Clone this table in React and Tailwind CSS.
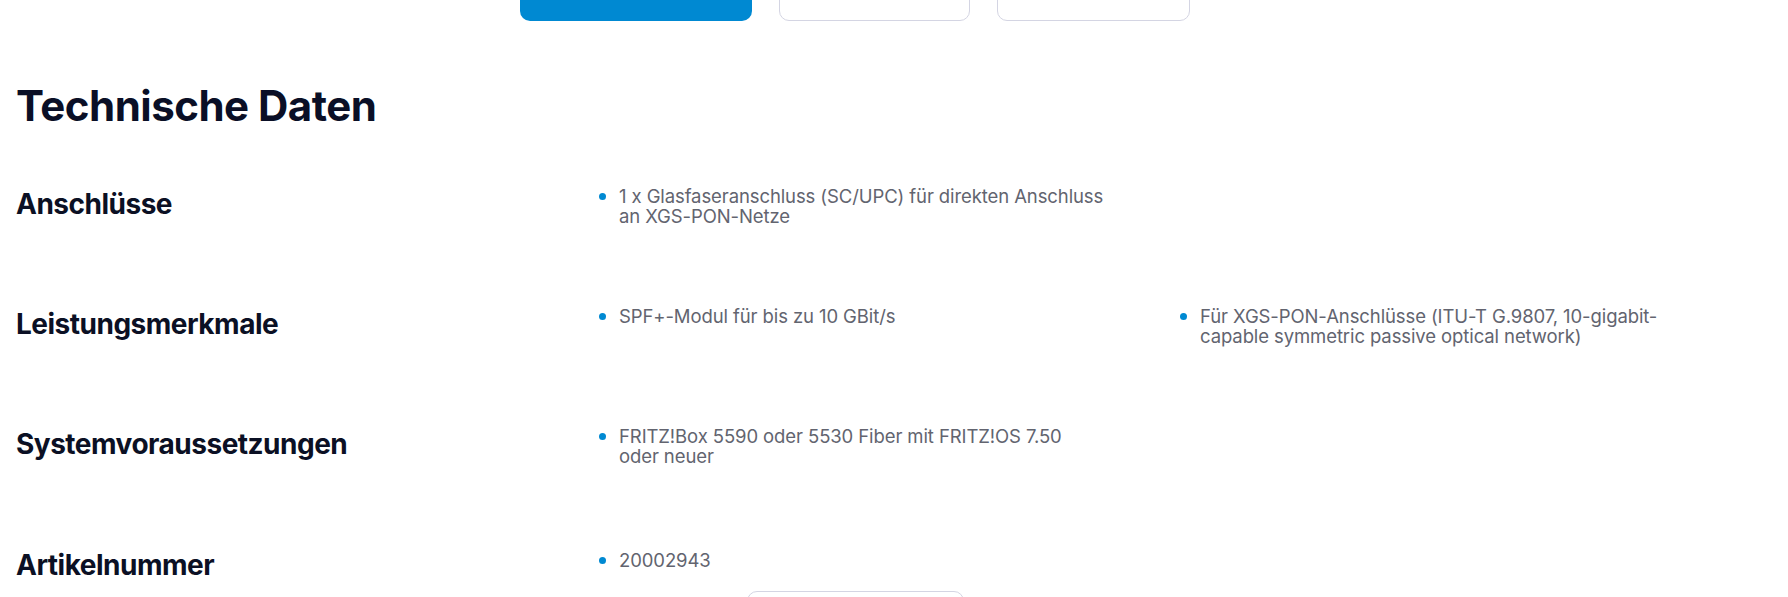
import React from "react";

// each value is a list of lines, broken where the original wraps
const rows = [
  { label: "Anschlüsse", values: [[["1 x Glasfaseranschluss (SC/UPC) für direkten Anschluss", "an XGS-PON-Netze"]]] },
  {
    label: "Leistungsmerkmale",
    values: [
      [["SPF+-Modul für bis zu 10 GBit/s"]],
      [["Für XGS-PON-Anschlüsse (ITU-T G.9807, 10-gigabit-", "capable symmetric passive optical network)"]],
    ],
  },
  { label: "Systemvoraussetzungen", values: [[["FRITZ!Box 5590 oder 5530 Fiber mit FRITZ!OS 7.50", "oder neuer"]]] },
  { label: "Artikelnummer", values: [[["20002943"]]] },
];

function ValueList({ items }) {
  return (
    <ul className="flex flex-col">
      {items.map((lines, k) => (
        <li key={k} className="flex items-start">
          <span className="mt-[7px] ml-[1px] h-[7px] w-[7px] shrink-0 rounded-full bg-[#0089d2]" />
          <span className="ml-[13px] w-[510px] whitespace-nowrap text-[18.5px] leading-[20px] tracking-[-0.1px] text-[#62646f]">
            {lines.map((l, n) => (
              <React.Fragment key={n}>
                {n > 0 && <br />}
                {l}
              </React.Fragment>
            ))}
          </span>
        </li>
      ))}
    </ul>
  );
}

export default function App() {
  return (
    <div className="min-h-[597px] bg-white overflow-hidden" style={{ fontFamily: "Inter, 'Noto Sans', sans-serif" }}>
      <div className="ml-4 w-[1678px]">
        {/* tab buttons, scrolled mostly out of view */}
        <div className="-mt-[43px] flex justify-center gap-[27px]">
          <button aria-label="Technische Daten" className="h-[64px] w-[232px] rounded-[10px] bg-[#0089d2]" />
          <button aria-label="Übersicht" className="h-[64px] w-[191px] rounded-[10px] border border-[#d4d5e3] bg-white" />
          <button aria-label="Bewertungen" className="h-[64px] w-[193px] rounded-[10px] border border-[#d4d5e3] bg-white" />
        </div>

        <h2 className="mt-[60px] text-[42px] font-bold leading-[50px] tracking-[-0.5px] text-[#0a0f26]">
          Technische Daten
        </h2>

        <div className="mt-[56px] flex flex-col">
          {rows.map((r, i) => {
            const last = i === rows.length - 1;
            return (
              <div key={r.label} className={last ? "flex pt-[1px]" : "flex h-[120px]"}>
                <div className="w-[582px] shrink-0 text-[28px] font-bold leading-[34px] tracking-[-0.5px] text-[#0b1024]">
                  {r.label}
                </div>
                {r.values.map((v, j) => (
                  <div
                    key={j}
                    className={`${last ? "mt-[2px]" : "-mt-[1px]"} ${j === 0 ? "w-[581px] shrink-0" : "flex-1"}`}
                  >
                    <ValueList items={v} />
                  </div>
                ))}
              </div>
            );
          })}
        </div>

        <div className="mt-[9px] flex justify-center">
          <button aria-label="Alle anzeigen" className="h-[52px] w-[217px] rounded-[10px] border border-[#d4d5e3] bg-white" />
        </div>
      </div>
    </div>
  );
}
